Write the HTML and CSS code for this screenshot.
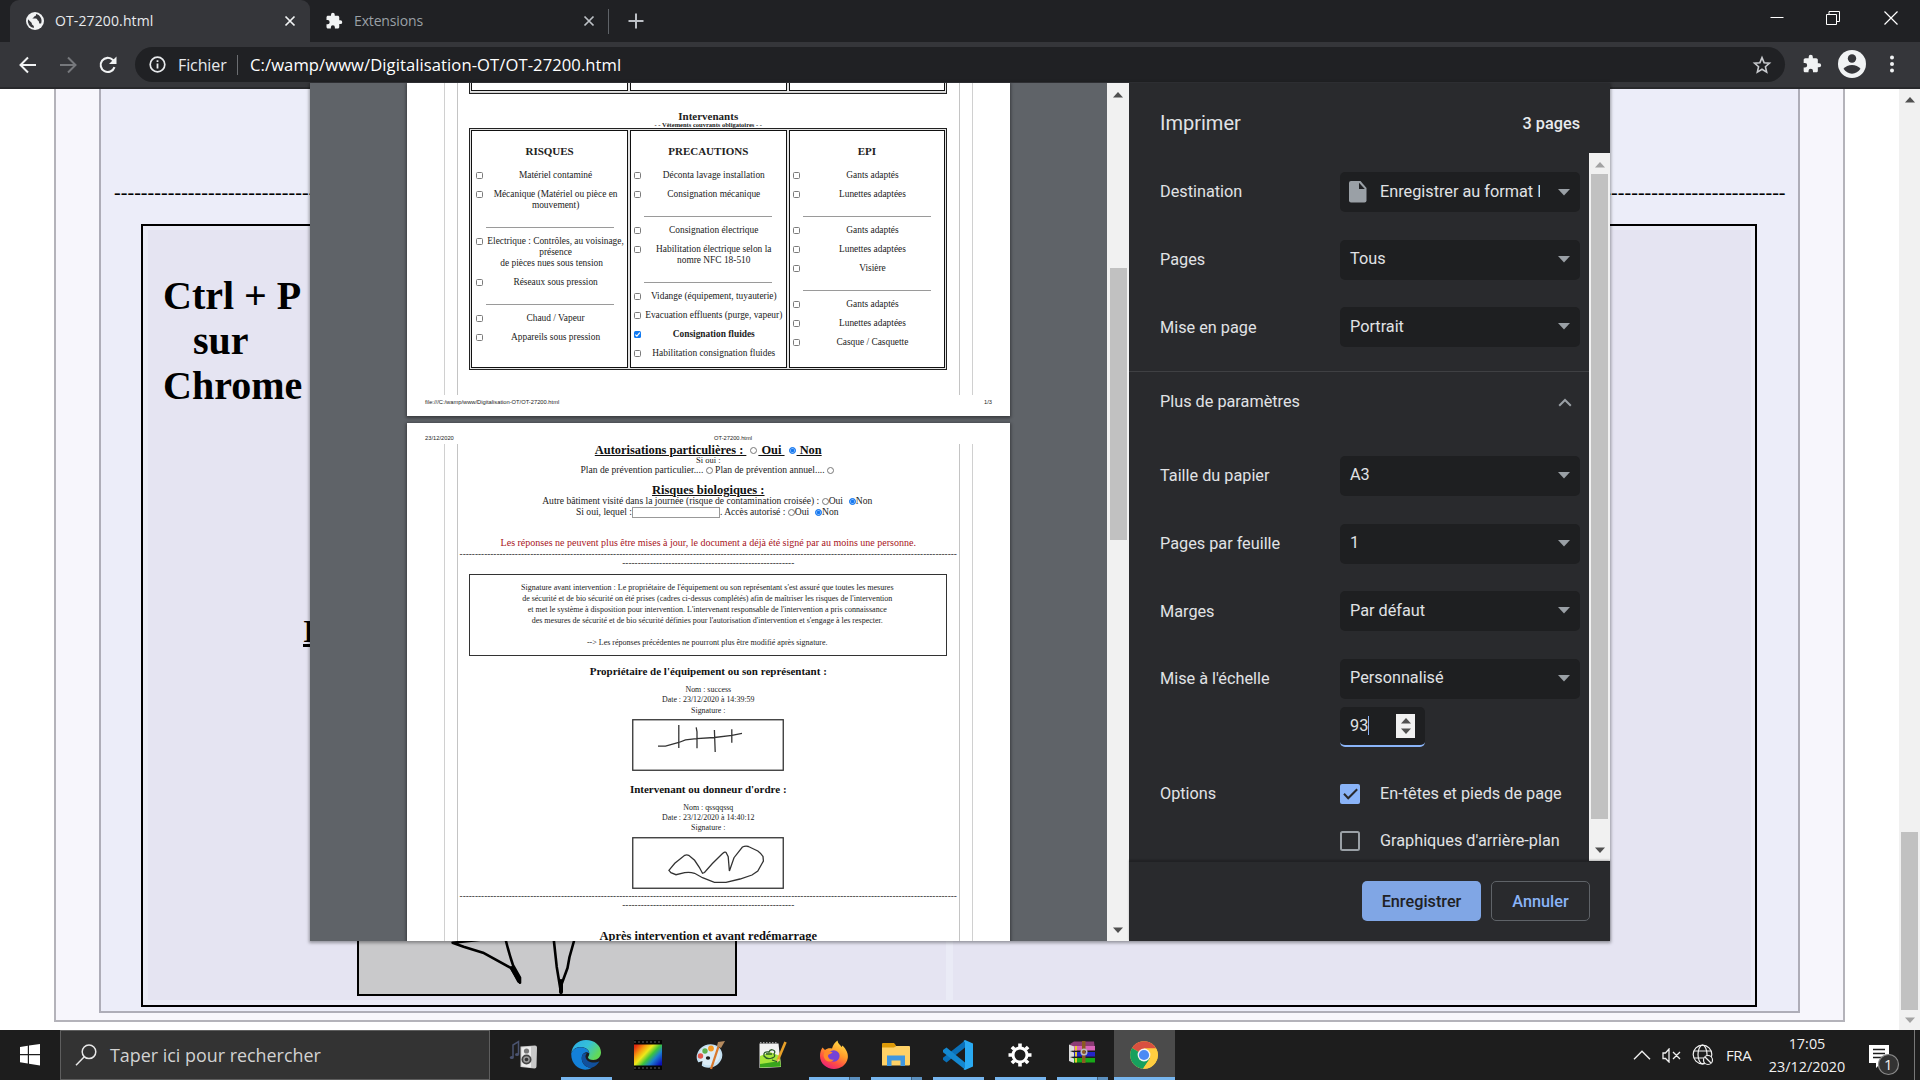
FILE: index.html
```html
<!DOCTYPE html>
<html lang="fr">
<head>
<meta charset="utf-8">
<title>OT-27200.html</title>
<link rel="stylesheet" href="styles.css">
</head>
<body>
<svg class="defs" width="0" height="0" aria-hidden="true">
  <symbol id="puzzle" viewBox="0 0 24 24"><path d="M20.5 11H19V7c0-1.1-.9-2-2-2h-4V3.5a2.5 2.5 0 0 0-5 0V5H4c-1.1 0-2 .9-2 2v3.8h1.5a2.7 2.7 0 0 1 0 5.4H2V20c0 1.1.9 2 2 2h3.8v-1.5a2.7 2.7 0 0 1 5.4 0V22H17c1.1 0 2-.9 2-2v-4h1.5a2.5 2.5 0 0 0 0-5z"/></symbol>
  <symbol id="cross" viewBox="0 0 12 12"><path d="M1.5 1.5l9 9M10.5 1.5l-9 9" fill="none" stroke="currentColor" stroke-width="1.7"/></symbol>
  <symbol id="caret" viewBox="0 0 12 7"><path d="M0 0h12L6 6.5z"/></symbol>
  <symbol id="arrow-up" viewBox="0 0 10 6"><path d="M5 0l5 5.5H0z"/></symbol>
  <symbol id="arrow-down" viewBox="0 0 10 6"><path d="M0 .5h10L5 6z"/></symbol>
</svg>

<div class="tabstrip">
  <div class="tab tab-active">
    <svg width="18" height="18" viewBox="0 0 18 18"><circle cx="9" cy="9" r="9" fill="#f1f3f4"/><path d="M2 7.3l3.8 3.6v1.4l2 1.6v2.2A7.2 7.2 0 0 1 2 7.3zM10 2c.4 1.6-.6 2.2-1.9 2.4-.2 1.4-1.5 1-1.6 2.2h3.6c1.6.5 1 2.1 2.6 2.4l.6 2.4 1.8.2c1.6-4-.6-8.600-5.1-9.600z" fill="#35363a"/></svg>
    <span class="tab-title">OT-27200.html</span>
    <svg class="tab-close" width="12" height="12"><use href="#cross"/></svg>
  </div>
  <div class="tab">
    <svg width="18" height="18" fill="#f1f3f4"><use href="#puzzle"/></svg>
    <span class="tab-title">Extensions</span>
    <svg class="tab-close" width="12" height="12"><use href="#cross"/></svg>
  </div>
  <div class="tab-sep"></div>
  <svg class="new-tab" width="16" height="16" viewBox="0 0 16 16"><path d="M8 .5v15M.5 8h15" stroke="#bdc1c6" stroke-width="2"/></svg>
  <div class="win-controls">
    <svg width="14" height="14" viewBox="0 0 14 14"><path d="M.5 6.500h13" stroke="#fff"/></svg>
    <svg width="14" height="14" viewBox="0 0 14 14"><path d="M.5 3.500h10v10H.5zM3 3.500V.5h10.500v10H11" fill="none" stroke="#fff"/></svg>
    <svg width="14" height="14" viewBox="0 0 14 14"><path d="M.5 .5l13 13M13.500 .5l-13 13" stroke="#fff" stroke-width="1.2"/></svg>
  </div>
</div>

<div class="toolbar">
  <div class="nav">
    <svg width="20" height="20" viewBox="0 0 20 20"><path d="M18 10H3M10 2.500L2.500 10l7.500 7.500" fill="none" stroke="#f1f3f4" stroke-width="2"/></svg>
    <svg width="20" height="20" viewBox="0 0 20 20"><path d="M2 10h15M10 2.500l7.500 7.500-7.500 7.500" fill="none" stroke="#76787c" stroke-width="2"/></svg>
    <svg width="20" height="20" viewBox="0 0 20 20"><path d="M16.500 12.200a7.100 7.100 0 1 1-1.600-7.200l1.500 1.500" fill="none" stroke="#f1f3f4" stroke-width="2.100"/><path d="M18.500 1.500v7.500h-7.500z" fill="#f1f3f4"/></svg>
  </div>
  <div class="omnibox">
    <svg width="17" height="17" viewBox="0 0 17 17"><circle cx="8.500" cy="8.500" r="7.300" fill="none" stroke="#e8eaed" stroke-width="1.700"/><path d="M7.600 7.500h1.800v5H7.600zM7.600 4.200h1.800V6H7.600z" fill="#e8eaed"/></svg>
    <span class="scheme">Fichier</span>
    <span class="omni-sep"></span>
    <span class="url">C:/wamp/www/Digitalisation-OT/OT-27200.html</span>
    <svg class="star" width="20" height="20" viewBox="0 0 24 24"><path d="M12 3.200l2.500 6 6.500.6-4.900 4.300 1.500 6.400L12 17.100l-5.600 3.400 1.500-6.400L3 9.800l6.500-.6z" fill="none" stroke="#c8cace" stroke-width="1.900"/></svg>
  </div>
  <div class="tools">
    <svg width="20" height="20" fill="#f1f3f4"><use href="#puzzle"/></svg>
    <svg width="28" height="28" viewBox="0 0 28 28"><circle cx="14" cy="14" r="14" fill="#f1f3f4"/><circle cx="14" cy="8.500" r="4.200" fill="#35363a"/><path d="M5.500 18.800c2-2.600 5-3.900 8.500-3.900s6.500 1.300 8.500 3.900c-2 3-5 4.900-8.500 4.900s-6.500-1.900-8.500-4.900z" fill="#35363a"/></svg>
    <svg width="6" height="18" viewBox="0 0 6 18" fill="#f1f3f4"><circle cx="3" cy="2.500" r="2"/><circle cx="3" cy="9" r="2"/><circle cx="3" cy="15.500" r="2"/></svg>
  </div>
</div>

<div class="viewport">
  <div class="doc">
    <div class="doc-inner">
      <div class="doc-dashes">---------------------------------------------------------------------------------------------------------------------------------------------------------------------------------------------------------------------------------------------------------</div>
      <div class="doc-box">
        <div class="doc-col">
          <p class="tip">Ctrl + P<br><span class="tip-mid">sur</span><br>Chrome</p>
          <p class="doc-heading">Intervention</p>
          <div class="big-sign">
            <svg width="376" height="122" viewBox="359 872 376 122" fill="none" stroke="#000" stroke-width="2.600" stroke-linejoin="round" stroke-linecap="round"><path d="M483 939.500l-30.400 3.200 11 4 19.400 6 28 15.300 9 14.700v-5l-7-12.500q-4-12-7.500-26M553.700 939l3 27.700 4.300 26v-7l6.500-17.700 2-11 4.500-16"/><path d="M512 968l7 13M561 981v11" stroke-width="4"/></svg>
          </div>
        </div>
        <div class="doc-col"></div>
      </div>
    </div>
  </div>
  <div class="page-scroll">
    <svg width="10" height="6" fill="#505050"><use href="#arrow-up"/></svg>
    <div class="page-thumb"></div>
    <svg width="10" height="6" fill="#a3a3a3"><use href="#arrow-down"/></svg>
  </div>
</div>

<div class="dialog">
  <div class="preview">
    <div class="sheet sheet-1">
      <div class="sheet-body">
        <div class="sheet-inner">
          <div class="grid grid-tail"><div class="cell"></div><div class="cell"></div><div class="cell"></div></div>
          <h2 class="people">Intervenants</h2>
          <p class="clothes">- - Vêtements couvrants obligatoires - -</p>
          <div class="grid grid-main">
            <div class="cell">
              <h3>RISQUES</h3>
              <div class="item"><i class="box"></i><span>Matériel contaminé</span></div>
              <div class="item"><i class="box"></i><span>Mécanique (Matériel ou pièce en<br>mouvement)</span></div>
              <div class="rule"></div>
              <div class="item"><i class="box"></i><span>Electrique : Contrôles, au voisinage,<br>présence<br><span class="shift">de pièces nues sous tension</span></span></div>
              <div class="item"><i class="box"></i><span>Réseaux sous pression</span></div>
              <div class="rule"></div>
              <div class="item"><i class="box"></i><span>Chaud / Vapeur</span></div>
              <div class="item"><i class="box"></i><span>Appareils sous pression</span></div>
            </div>
            <div class="cell">
              <h3>PRECAUTIONS</h3>
              <div class="item"><i class="box"></i><span>Déconta lavage installation</span></div>
              <div class="item"><i class="box"></i><span>Consignation mécanique</span></div>
              <div class="rule"></div>
              <div class="item"><i class="box"></i><span>Consignation électrique</span></div>
              <div class="item"><i class="box"></i><span>Habilitation électrique selon la<br>nomre NFC 18-510</span></div>
              <div class="rule"></div>
              <div class="item"><i class="box"></i><span>Vidange (équipement, tuyauterie)</span></div>
              <div class="item"><i class="box"></i><span>Evacuation effluents (purge, vapeur)</span></div>
              <div class="item strong"><i class="box box-on"><svg width="7" height="7" viewBox="0 0 7 7"><path d="M1.300 3.600L2.900 5.200 5.800 1.600" fill="none" stroke="#fff" stroke-width="1.200"/></svg></i><span>Consignation fluides</span></div>
              <div class="item"><i class="box"></i><span>Habilitation consignation fluides</span></div>
            </div>
            <div class="cell">
              <h3>EPI</h3>
              <div class="item"><i class="box"></i><span>Gants adaptés</span></div>
              <div class="item"><i class="box"></i><span>Lunettes adaptées</span></div>
              <div class="rule"></div>
              <div class="item"><i class="box"></i><span>Gants adaptés</span></div>
              <div class="item"><i class="box"></i><span>Lunettes adaptées</span></div>
              <div class="item"><i class="box"></i><span>Visière</span></div>
              <div class="rule"></div>
              <div class="item"><i class="box"></i><span>Gants adaptés</span></div>
              <div class="item"><i class="box"></i><span>Lunettes adaptées</span></div>
              <div class="item"><i class="box"></i><span>Casque / Casquette</span></div>
            </div>
          </div>
        </div>
      </div>
      <div class="sheet-foot"><span>file:///C:/wamp/www/Digitalisation-OT/OT-27200.html</span><span>1/3</span></div>
    </div>

    <div class="sheet sheet-2">
      <div class="sheet-head"><span class="head-date">23/12/2020</span><span>OT-27200.html</span></div>
      <div class="sheet-body">
        <div class="sheet-inner">
          <h2 class="auth"><u>Autorisations particulières : </u><i class="radio"></i><u>&nbsp;Oui </u><i class="radio radio-on"></i><u>&nbsp;Non</u></h2>
          <p class="if-yes">Si oui :</p>
          <p class="plan">Plan de prévention particulier.... <i class="radio"></i> Plan de prévention annuel.... <i class="radio"></i></p>
          <h2 class="bio"><u>Risques biologiques :</u></h2>
          <p class="line">Autre bâtiment visité dans la journée (risque de contamination croisée) : <i class="radio"></i>Oui &nbsp;<i class="radio radio-on"></i>Non</p>
          <p class="line access">Si oui, lequel :<i class="field"></i>. Accès autorisé : <i class="radio"></i>Oui &nbsp;<i class="radio radio-on"></i>Non</p>
          <p class="locked">Les réponses ne peuvent plus être mises à jour, le document a déjà été signé par au moins une personne.</p>
          <p class="dash-long">------------------------------------------------------------------------------------------------------------------------------------------------------------------</p>
          <p class="dash-short">--------------------------------------------------------</p>
          <div class="notice">
            <p>Signature avant intervention : Le propriétaire de l'équipement ou son représentant s'est assuré que toutes les mesures</p>
            <p>de sécurité et de bio sécurité on été prises (cadres ci-dessus complétés) afin de maîtriser les risques de l'intervention</p>
            <p>et met le système à disposition pour intervention. L'intervenant responsable de l'intervention a pris connaissance</p>
            <p>des mesures de sécurité et de bio sécurité définies pour l'autorisation d'intervention et s'engage à les respecter.</p>
            <p class="notice-last">--&gt; Les réponses précédentes ne pourront plus être modifié après signature.</p>
          </div>
          <h3 class="signer">Propriétaire de l'équipement ou son représentant :</h3>
          <div class="who"><p>Nom : success</p><p>Date : 23/12/2020 à 14:39:59</p><p class="who-sign">Signature :</p></div>
          <svg class="sign" width="152" height="52" viewBox="0 0 152 52"><rect x=".75" y=".75" width="150.500" height="50.500"/><path d="M26 27.200h7.500l13.300-3.700 6.700-2.600 11-1.200 17.900-1.200 17.600-2.200 10-2M46.800 6v23M64.200 8.300l.8 4.500v16.500M82.400 11l.8 22M99.800 10.300v13.400"/></svg>
          <h3 class="signer signer-2">Intervenant ou donneur d'ordre :</h3>
          <div class="who who-2"><p>Nom : qssqqssq</p><p>Date : 23/12/2020 à 14:40:12</p><p>Signature :</p></div>
          <svg class="sign sign-2" width="152" height="52" viewBox="0 0 152 52"><rect x=".75" y=".75" width="150.500" height="50.500"/><path d="M36.900 33.300l5.900-7 9.900-8q2-.8 4 0l5.900 5 4.700 7 3.200 6 2-.8 7.900-9 9.900-9.800q3-2.500 3.900-1l2 4 1.200 14.300 4.600-13.300 8.400-10.700q3-1.300 6-.5l9.400 4.500q4 3 5.200 5.500l.4 4.500-5.600 10-5.800 4-12 4-14 3.300H82.400l-11.900-4.600-7.900-4.400q-5-1.500-9.900-.6l-8.700 2-5.100-2z"/></svg>
          <p class="dash-long dash-2">------------------------------------------------------------------------------------------------------------------------------------------------------------------</p>
          <p class="dash-short dash-3">--------------------------------------------------------</p>
          <h2 class="after">Après intervention et avant redémarrage</h2>
        </div>
      </div>
    </div>
  </div>

  <div class="preview-scroll">
    <svg width="10" height="6" fill="#505050"><use href="#arrow-up"/></svg>
    <div class="preview-thumb"></div>
    <svg width="10" height="6" fill="#505050"><use href="#arrow-down"/></svg>
  </div>

  <div class="panel">
    <div class="panel-head"><span class="panel-title">Imprimer</span><span class="panel-count">3 pages</span></div>
    <div class="panel-mid">
      <div class="settings">
        <div class="row first"><span class="label">Destination</span><div class="select dest"><svg width="18" height="22" viewBox="0 0 18 22"><path d="M2 0h9.500L17.500 7v12.500a2 2 0 0 1-2 2H2a2 2 0 0 1-2-2V2a2 2 0 0 1 2-2z" fill="#9aa0a6"/><path d="M10 1.800V8h5.800z" fill="#1f2023"/></svg><span class="dest-text">Enregistrer au format PDF</span><svg class="caret" width="12" height="7"><use href="#caret"/></svg></div></div>
        <div class="row"><span class="label">Pages</span><div class="select"><span>Tous</span><svg class="caret" width="12" height="7"><use href="#caret"/></svg></div></div>
        <div class="row"><span class="label">Mise en page</span><div class="select"><span>Portrait</span><svg class="caret" width="12" height="7"><use href="#caret"/></svg></div></div>
        <div class="more"><span>Plus de paramètres</span><svg width="14" height="9" viewBox="0 0 14 9"><path d="M1.200 7.800L7 2l5.800 5.800" fill="none" stroke="#9aa0a6" stroke-width="2"/></svg></div>
        <div class="row paper"><span class="label">Taille du papier</span><div class="select"><span>A3</span><svg class="caret" width="12" height="7"><use href="#caret"/></svg></div></div>
        <div class="row"><span class="label">Pages par feuille</span><div class="select"><span>1</span><svg class="caret" width="12" height="7"><use href="#caret"/></svg></div></div>
        <div class="row"><span class="label">Marges</span><div class="select"><span>Par défaut</span><svg class="caret" width="12" height="7"><use href="#caret"/></svg></div></div>
        <div class="row"><span class="label">Mise à l'échelle</span><div class="select"><span>Personnalisé</span><svg class="caret" width="12" height="7"><use href="#caret"/></svg></div></div>
        <div class="scale"><span>93</span><i class="cursor"></i><span class="spin"><svg width="10" height="6" fill="#505050"><use href="#arrow-up"/></svg><svg width="10" height="6" fill="#505050"><use href="#arrow-down"/></svg></span></div>
        <div class="option"><span class="label">Options</span><svg width="20" height="20" viewBox="0 0 20 20"><rect width="20" height="20" rx="2" fill="#8ab4f8"/><path d="M4 9.800l4.200 4.400L17.200 5.300" fill="none" stroke="#292a2d" stroke-width="2"/></svg><span>En-têtes et pieds de page</span></div>
        <div class="option option-2"><span class="label"></span><svg width="20" height="20" viewBox="0 0 20 20"><rect x="1" y="1" width="18" height="18" rx="1.500" fill="none" stroke="#9aa0a6" stroke-width="2"/></svg><span>Graphiques d'arrière-plan</span></div>
      </div>
      <div class="panel-scroll">
        <svg width="10" height="6" fill="#a3a3a3"><use href="#arrow-up"/></svg>
        <div class="panel-thumb"></div>
        <svg width="10" height="6" fill="#505050"><use href="#arrow-down"/></svg>
      </div>
    </div>
    <div class="panel-foot"><span class="btn save">Enregistrer</span><span class="btn cancel">Annuler</span></div>
  </div>
</div>

<div class="taskbar">
  <div class="start"><svg width="20" height="22" viewBox="0 0 20 22" fill="#fff"><path d="M0 3l7.800-1.200V10H0zM9 1.600L20 0v10H9zM0 11.200h7.800v8.200L0 18.300zM9 11.200h11V21.500L9 19.700z"/></svg></div>
  <div class="search"><svg width="22" height="22" viewBox="0 0 22 22" fill="none" stroke="#e8e8e8" stroke-width="1.500"><circle cx="14" cy="7.800" r="6.800"/><path d="M9.300 12.700L1 21.200"/></svg><span>Taper ici pour rechercher</span></div>
  <div class="apps">
    <div class="app"><svg width="30" height="30" viewBox="0 0 30 30"><path d="M4 17V5l5.500-3.500v13" fill="none" stroke="#4a5370" stroke-width="1.500"/><ellipse cx="2.800" cy="17.500" rx="2" ry="1.600" fill="#4a5370"/><ellipse cx="8" cy="14.500" rx="2" ry="1.600" fill="#4a5370"/><path d="M11.500 6.500L26 5.500q2 0 2 2l-.5 19q0 2-2 2l-14-1.500z" fill="#c9c9c9"/><path d="M12.500 7.500l9.500-.7v20.700l-9.500-1.200z" fill="#ececec"/><circle cx="17.500" cy="11" r="2.600" fill="#777"/><circle cx="17.500" cy="19.500" r="5" fill="#444"/><circle cx="17.500" cy="19.500" r="3.300" fill="#999"/><circle cx="17.500" cy="19.500" r="1.800" fill="#333"/></svg></div>
    <div class="app run"><svg width="30" height="30" viewBox="0 0 30 30"><defs><linearGradient id="eg" x1="0" y1="0" x2="1" y2=".5"><stop offset="0" stop-color="#2aa9e8"/><stop offset=".55" stop-color="#35c1d8"/><stop offset="1" stop-color="#62d957"/></linearGradient></defs><path d="M.3 13.500C1 5.700 7 0 15 0c8.500 0 15 5.500 15 12.500 0 4.500-3.500 7.500-7.500 7.500-3.500 0-5.500-1.500-5.500-2.500s1.300-1.500 1.300-4C18.300 9.500 14 7 9.500 7 5 7 1.500 9.500.3 13.500z" fill="url(#eg)"/><path d="M.2 13.500C1.500 9.500 5 7.200 9.500 7.200c4.800 0 8.600 2.600 8.800 6.300-2-2-6-1.500-7.300 2.500-1.500 5.500 3 12.500 10 11.500C13.500 33 0 28 .2 13.500z" fill="#1380d8"/><path d="M11.500 14.500C9 21 13.500 28 20.500 27.700c3.500-1 6.500-3.700 8-6.500-5 2.500-13 1.500-14-4.200-.2-1.500.5-2.700 1.500-3.700-1.500-.3-3.500 0-4.500 1.200z" fill="#11509c"/></svg></div>
    <div class="app"><svg width="28" height="30" viewBox="0 0 28 30"><defs><linearGradient id="mv" x1="0" y1=".15" x2="1" y2=".85"><stop offset="0" stop-color="#e22a10"/><stop offset=".22" stop-color="#f59a10"/><stop offset=".4" stop-color="#ede81a"/><stop offset=".58" stop-color="#3cc43c"/><stop offset=".75" stop-color="#1b7ecf"/><stop offset="1" stop-color="#0c10b8"/></linearGradient></defs><path d="M0 0h28v30H0z" fill="#050505"/><path d="M0 2h28M0 28h28" stroke="#333" stroke-width="2" stroke-dasharray="2 2"/><path d="M0 4.500h28v21H0z" fill="url(#mv)"/></svg></div>
    <div class="app"><svg width="30" height="30" viewBox="0 0 30 30"><ellipse cx="14.500" cy="16" rx="13" ry="11.500" transform="rotate(-22 14.500 16)" fill="#c3dff0"/><ellipse cx="14.500" cy="15.500" rx="11" ry="9.500" transform="rotate(-22 14.500 15.500)" fill="#dcecf6"/><circle cx="5.500" cy="16" r="2.700" fill="#e2574c"/><circle cx="10" cy="11" r="2.700" fill="#5eb04f"/><circle cx="16" cy="8.500" r="2.900" fill="#f59a23"/><ellipse cx="13" cy="18" rx="2.200" ry="1.800" fill="#1d1d1d"/><path d="M1.500 23l6-2-1 6z" fill="#1d1d1d"/><path d="M23.500 6.500L16 29" stroke="#d9772b" stroke-width="2.300"/><path d="M22 6l1-4 7-1-4 7z" fill="#b58a5e"/></svg></div>
    <div class="app"><svg width="30" height="30" viewBox="0 0 30 30"><path d="M2.500 3.500h19l2.500 23.500-21.500 1z" fill="#f2f2f2"/><path d="M3 16l10-4 10 4 .8 10.500L3 27.500z" fill="#a5e63a"/><path d="M3 24l20-3 .8 5.500L3 27.500z" fill="#38a51c"/><path d="M7 16q-1-5 5-4 1-3 4-2t1 4q2 3-2 4-5 2-8-2zM15 20l6 2M9 14h6" fill="none" stroke="#2d5b2d" stroke-width="1.300"/><path d="M3 3h18" stroke="#999" stroke-width="2" stroke-dasharray="1.500 1.500"/><path d="M28.500 2L20.500 21" stroke="#e8a028" stroke-width="2.600"/><path d="M20.800 19l-.8 4 2.500-3z" fill="#eecb95"/></svg></div>
    <div class="app run multi"><svg width="30" height="30" viewBox="0 0 30 30"><defs><linearGradient id="ff" x1=".8" y1="0" x2=".3" y2="1"><stop offset="0" stop-color="#ffe14a"/><stop offset=".45" stop-color="#ff9a2a"/><stop offset=".75" stop-color="#ff4b45"/><stop offset="1" stop-color="#e8207c"/></linearGradient></defs><path d="M3.500 7.500L6 10c2-1.500 4-2.200 7-1.500C14 5 16 2 18.500.5c.3 3 2.500 4 4 6.500l1-1.500C27.500 9.500 29.500 14 28.800 18 27.500 25 21.500 29 15 29 7.500 29 1 23.500 1 16c0-3.500 1-6.500 2.500-8.500z" fill="url(#ff)"/><circle cx="14.800" cy="16" r="5.800" fill="#7542d6"/><path d="M6 10c3 .5 5 1.500 7.500 2.200-1 2-4 1.500-4.500 3.300-.5 2 2 5 6 4-3 4-10 2-10.500-4z" fill="#ff8a2a"/></svg></div>
    <div class="app run multi"><svg width="28" height="24" viewBox="0 0 28 24"><path d="M0 1q0-1 1-1h11l2 2.500-1 3H0z" fill="#dd9a08"/><path d="M0 4.500h12l2-1.500h13q1 0 1 1v17.500q0 1-1 1H0z" fill="#ffd166"/><path d="M5 12.500h18V23h-4.500v-5.500h-9V23H5z" fill="#3f97e0"/></svg></div>
    <div class="app run"><svg width="30" height="30" viewBox="0 0 30 30"><path d="M22 7.500L3.500 22.500 0 19.800v-2L22 .500z" fill="#0a70b8"/><path d="M22 22.500L3.500 7.500 0 10v2.200L22 29.500z" fill="#1488d0"/><path d="M22 0l8 3.500v23L22 30l-1.500-.8 1.500-1.500V2.500L20.500 1z" fill="#2aaaf2"/></svg></div>
    <div class="app run"><svg width="24" height="24" viewBox="-12 -12 24 24" fill="none" stroke="#fff"><circle r="7" stroke-width="3"/><path d="M0-8V-11.500M0 8V11.500M8 0H11.500M-8 0H-11.500M5.700-5.700L8.100-8.100M-5.700 5.700L-8.100 8.100M5.700 5.700L8.100 8.100M-5.700-5.700L-8.100-8.100" stroke-width="3.600"/></svg></div>
    <div class="app run multi"><svg class="lift" width="28" height="24" viewBox="0 0 28 24"><path d="M2 3l4-2.500h20L27 9H5z" fill="#8d3b76"/><path d="M5 5h22v4.500H5z" fill="#d864b8"/><path d="M5 11h22v4.500H5z" fill="#2424c8"/><path d="M5 17h22v4.500H5z" fill="#18a818"/><path d="M1 3.500l5 2v4l-4 .5 4 1.500v4l-4 .5 4 1.500v4.500l-5-2z" fill="#ddd"/><path d="M8 5v4.500M8 11v4.500M8 17v4.500" stroke="#e8c830" stroke-width="2"/><path d="M14 0h3.500v22H14z" fill="#8a5a22"/><circle cx="16" cy="11" r="2.800" fill="none" stroke="#bbb" stroke-width="1.500"/></svg></div>
    <div class="app run active"><svg width="28" height="28" viewBox="0 0 28 28"><circle cx="14" cy="14" r="13.800" fill="#ffcd40"/><path d="M14 14L2 7.100A13.800 13.800 0 0 1 26.200 7.500H14z" fill="#d95040"/><path d="M14 14L2 7.100A13.800 13.800 0 0 0 13 27.800L20 17.400z" fill="#17a05e"/><path d="M26.200 7.500H14L20 17.400 13 27.800A13.800 13.800 0 0 0 26.200 7.500z" fill="#ffcd40"/><circle cx="14" cy="14" r="6.400" fill="#f4f4f4"/><circle cx="14" cy="14" r="5.100" fill="#4a8af4"/></svg></div>
  </div>
  <div class="tray">
    <svg width="18" height="10" viewBox="0 0 18 10"><path d="M1 9.300l8-8 8 8" fill="none" stroke="#f0f0f0" stroke-width="1.400"/></svg>
    <svg class="vol" width="19" height="15" viewBox="0 0 19 15" fill="none" stroke="#f0f0f0" stroke-width="1.300"><path d="M1 5h2.500L7 1v13L3.500 10.500H1zM11 4l7 7M18 4l-7 7"/></svg>
    <svg class="net" width="22" height="22" viewBox="0 0 22 22" fill="none" stroke="#f0f0f0" stroke-width="1.200"><circle cx="10.500" cy="10.500" r="9.300"/><ellipse cx="10.500" cy="10.500" rx="4.500" ry="9.300"/><path d="M2 7h17M2 14h11"/><circle cx="16" cy="16" r="4.500" fill="#1d1d1d"/><path d="M13 13l6 6"/></svg>
    <span class="lang">FRA</span>
    <div class="clock"><span>17:05</span><span>23/12/2020</span></div>
    <div class="notif"><svg width="32" height="32" viewBox="0 0 32 32"><path d="M0 0h20v18h-8l-5 5v-5H0z" fill="#fff"/><path d="M4 4.500h12M4 8.500h12M4 12.500h9" stroke="#1d1d1d" stroke-width="1.300"/><circle cx="19.500" cy="19.500" r="10" fill="#333" stroke="#8a8a8a" stroke-width="1.200"/></svg><span class="badge">1</span></div>
    <div class="show-desktop"></div>
  </div>
</div>
</body>
</html>
```
FILE: styles.css
```css
* { box-sizing: border-box; }
html, body { margin: 0; height: 1080px; overflow: hidden; }
body { width: 1920px; display: flex; flex-direction: column; background: #fff; position: relative; }
p, h2, h3 { margin: 0; }
svg { display: block; flex: none; }
.defs { position: absolute; }

/* Browser window */
.tabstrip { height: 42px; flex: none; display: flex; align-items: center; background: #202124; font: 15px/20px "Open Sans", sans-serif; color: #9aa0a6; padding-left: 10px; }
.tab { width: 298px; height: 42px; display: flex; align-items: center; padding: 0 13px 0 15px; }
.tab-active { width: 300px; background: #35363a; color: #e8eaed; border-radius: 9px 9px 0 0; padding: 0 14px 0 16px; }
.tab-title { margin-left: 11px; flex: 1; font-size: 14px; letter-spacing: -.15px; }
.tab-active .tab-title { letter-spacing: .12px; }
.tab-close { color: #bdc1c6; }
.tab-active .tab-close { color: #f1f3f4; }
.tab-sep { width: 1px; height: 25px; background: #5f6368; margin-right: 19px; }
.win-controls { margin-left: auto; display: flex; gap: 43px; padding: 0 22px 6px 0; }
.win-controls svg:nth-child(2) { margin-left: -1px; margin-right: 1px; }

.toolbar { height: 47px; flex: none; background: #35363a; border-bottom: 2px solid #28292c; display: flex; align-items: flex-start; padding-top: 5px; }
.nav { display: flex; gap: 20px; padding: 8px 17px 0 18px; }
.omnibox { width: 1650px; height: 35px; border-radius: 18px; background: #202124; display: flex; align-items: center; padding: 0 13px 0 14px; color: #e8eaed; font: 17px/24px "Open Sans", sans-serif; }
.scheme { width: 59px; margin-left: 12px; font-size: 16px; letter-spacing: -.1px; }
.omni-sep { width: 1px; height: 20px; background: #6b6d71; margin-right: 12px; }
.url { font-size: 16.600px; letter-spacing: .08px; color: #fff; }
.star { margin-left: auto; }
.tools { display: flex; align-items: center; padding: 3px 0 0 17px; gap: 16px; }
.tools svg:last-child { margin-left: 7px; }

/* Work order page behind the dialog */
.viewport { height: 941px; flex: none; display: flex; padding-left: 54px; overflow: hidden; }
.doc { width: 1791px; height: 933px; border: 2px solid #b4b3ba; border-top: 0; background: #f7f6fc; padding: 0 43px 7px; }
.doc-inner { height: 924px; border: 2px solid #aeadb8; border-top: 0; background: #ecedf9; padding: 93px 41px 4px 40px; font-family: "Liberation Serif", serif; display: flex; flex-direction: column; }
.doc-dashes { height: 42px; margin: 0 -31px 0 -27px; font-size: 20px; line-height: 20px; letter-spacing: .053px; white-space: nowrap; }
.doc-box { flex: 1; border: 2px solid #000; background: #eaebf6; padding: 4px 4px 5px 5px; display: flex; gap: 7px; }
.doc-col { flex: 1; background: #e5e4f2; display: flex; flex-direction: column; align-items: flex-start; }
.tip { margin: 43px 0 0 15px; font-size: 40px; line-height: 45px; font-weight: bold; white-space: nowrap; }
.tip-mid { margin-left: 30px; }
.doc-heading { margin: 205px 0 0 155px; font-size: 32px; line-height: 36px; font-weight: bold; text-decoration: underline; text-decoration-thickness: 3px; }
.big-sign { margin: 221px 0 0 209px; width: 380px; height: 126px; border: 2px solid #000; background: #c9c9cb; }
.page-scroll { width: 21px; margin-left: auto; background: #f1f1f1; display: flex; flex-direction: column; align-items: center; padding: 8px 0 7px; }
.page-thumb { width: 17px; height: 178px; background: #c1c1c1; margin: auto 0 7px; }

/* Print dialog */
.dialog { position: absolute; left: 310px; top: 83px; width: 1300px; height: 858px; display: flex; background: #292a2d; box-shadow: 0 1px 3px 1px rgba(0,0,0,.35); }
.preview { width: 797px; height: 858px; background: #5f6368; padding-left: 97px; overflow: hidden; font-family: "Liberation Serif", serif; color: #222; }
.sheet { width: 603px; background: #fff; box-shadow: 0 1px 3px 1px rgba(0,0,0,.4); }
.sheet-1 { height: 333px; }
.sheet-2 { height: 540px; margin-top: 7px; }
.sheet-body { width: 529px; margin-left: 37px; border: solid #d0d0d0; border-width: 0 1.500px 0 1px; padding: 0 12.500px 0 12px; overflow: hidden; }
.sheet-inner { border: solid #c4c4c4; border-width: 0 1.500px 0 1px; text-align: center; white-space: nowrap; }
.sheet-1 .sheet-inner { height: 313px; }
.sheet-2 .sheet-inner { height: 520px; }
.grid { width: 478px; margin: 0 auto; display: flex; gap: 2px; border: 1px solid #222; background: #cfcfcf; padding: 1px; }
.cell { flex: 1; border: 1.500px solid #111; background: #fff; outline: 1px solid #e4e4e4; }
.grid-tail { height: 12px; border-top: 0; margin-top: -1px; padding: 0 1px 2px; }
.grid-tail .cell { border-top: 0; }
.people { margin-top: 16px; font-size: 11px; line-height: 12px; }
.clothes { font-size: 6.500px; line-height: 6px; font-weight: bold; height: 6px; }
.grid-main { height: 242px; }
.cell h3 { margin-top: 12px; margin-bottom: 11px; font-size: 11px; line-height: 16px; }
.item { display: flex; font-size: 9.400px; line-height: 11px; margin-bottom: 8px; padding-left: 4px; }
.cell + .cell .item { padding-left: 3px; }
.item > span { flex: 1; }
.item .shift { margin-right: 8px; }
.strong { font-weight: bold; }
.box { width: 7px; height: 7px; margin: 2px 1px 0 0; border: 1px solid #7b7b7b; border-radius: 1.500px; flex: none; }
.box-on { border: 0; background: #0f79f2; }
.rule { width: 128px; height: 1px; margin: 16px auto 8px; background: #9a9a9a; }
.sheet-foot, .sheet-head { font: 5.750px/8px "Liberation Sans", sans-serif; color: #222; display: flex; }
.sheet-foot { justify-content: space-between; padding: 3px 18px 0 18px; }
.sheet-head { height: 21px; padding: 11px 0 0 18px; }
.head-date { width: 289px; }
.radio { display: inline-block; width: 7px; height: 7px; border: 1px solid #777; border-radius: 50%; background: #fff; vertical-align: -.5px; }
.radio-on { border: 1px solid #1477ef; background: #1477ef; box-shadow: inset 0 0 0 .7px #9cc8ff; }
.auth { font-size: 12.400px; line-height: 12px; height: 12px; color: #111; }
.auth .radio { margin: 0 1px 0 4px; vertical-align: .5px; }
.if-yes { font-size: 8.500px; line-height: 8px; }
.plan { font-size: 9.600px; line-height: 12px; padding-right: 2px; }
.bio { margin-top: 8px; font-size: 12.500px; line-height: 12px; height: 11px; color: #111; }
.line { font-size: 9.600px; line-height: 11px; height: 11px; padding-right: 2px; }
.line .radio-on { margin-left: 1px; }
.field { display: inline-block; width: 88px; height: 11px; border: 1px solid #999; vertical-align: -3px; }
.locked { margin-top: 20px; font-size: 10px; line-height: 11px; height: 12px; color: #a8141c; }
.dash-long, .dash-short { font-size: 9.230px; line-height: 10px; height: 10px; margin: 0; color: #000; }
.dash-short { line-height: 9px; height: 9px; }
.notice { width: 478px; height: 82px; margin: 6px auto 0; border: 1.500px solid #333; padding-top: 7px; padding-right: 2px; font-size: 8px; line-height: 11px; }
.notice-last { margin-top: 11px; }
.signer { margin-top: 9px; font-size: 11px; line-height: 12px; color: #111; }
.who { margin-top: 8px; font-size: 7.900px; line-height: 10px; }
.who-sign { line-height: 11px; }
.sign { margin: 3px auto 0; fill: none; stroke: #333; stroke-width: 1.300; }
.signer-2 { margin-top: 12px; }
.sign-2 { margin-top: 4px; }
.dash-2 { margin-top: 2px; }
.dash-3 { line-height: 9px; height: 9px; }
.after { margin-top: 20px; font-size: 12.450px; line-height: 12px; color: #111; }

.preview-scroll { width: 22px; background: #f1f1f1; display: flex; flex-direction: column; align-items: center; padding: 9px 0 8px; }
.preview-thumb { width: 17px; height: 272px; margin: 170px 0 auto; background: #c1c1c1; }

.panel { width: 481px; display: flex; flex-direction: column; background: #292a2d; color: #e0e2e5; font: 16.250px/20px Roboto, sans-serif; }
.panel-head { height: 70px; display: flex; justify-content: space-between; align-items: center; padding: 10px 30px 0 31px; }
.panel-title { font-size: 20px; }
.panel-count { font-weight: 500; font-size: 16.250px; color: #e8eaed; padding-top: 2px; }
.panel-mid { height: 708px; display: flex; }
.settings { width: 460px; height: 708px; overflow: hidden; }
.row { display: flex; align-items: center; padding-left: 31px; margin-bottom: 27.500px; height: 40px; }
.first { margin-top: 19px; }
.label { width: 180px; flex: none; padding-top: 1px; }
.first .label, .paper .label { padding-top: 0; }
.select { width: 240px; height: 40px; border-radius: 5px; background: #1e1f21; display: flex; align-items: center; padding: 0 10px 1px; }
.paper .select { padding-bottom: 2px; }
.caret { margin-left: auto; fill: #9aa0a6; }
.dest { padding: 0 10px 0 9px; }
.dest-text { width: 160px; margin-left: 13px; overflow: hidden; white-space: nowrap; }
.more { height: 59px; border-top: 1px solid #3f4043; display: flex; align-items: center; justify-content: space-between; padding: 2px 17px 0 31px; margin-top: -3.500px; margin-bottom: 26px; }
.scale { width: 85px; height: 40px; margin: -19.500px 0 0 211px; border-radius: 5px; border-bottom: 2px solid #8ab4f8; background: #1e1f21; display: flex; align-items: center; padding: 0 10px; }
.cursor { width: 1px; height: 19px; background: #8ab4f8; }
.spin { width: 19px; height: 24px; margin-left: auto; background: #f1f1f1; display: flex; flex-direction: column; align-items: center; justify-content: center; gap: 4px; }
.option { height: 20px; margin-top: 37px; padding-left: 31px; display: flex; align-items: center; }
.option .label { padding-top: 0; }
.option svg { margin-right: 20px; }
.option-2 { margin-top: 27px; }
.panel-scroll { width: 21px; background: #f1f1f1; display: flex; flex-direction: column; align-items: center; padding: 9px 0 8px; }
.panel-thumb { width: 17px; height: 645px; margin: 6px 0 auto; background: #c1c1c1; }
.panel-foot { height: 80px; border-top: 1px solid #202124; box-shadow: 0 -1px 2px rgba(0,0,0,.25); display: flex; justify-content: flex-end; gap: 10px; padding: 19px 20px 0 0; background: #292a2d; }
.btn { height: 40px; border-radius: 5px; text-align: center; line-height: 41px; font-weight: 500; font-size: 16.250px; }
.save { width: 119px; background: #80a6e5; color: #202124; }
.cancel { width: 99px; border: 1px solid #5f6368; line-height: 40px; color: #8ab4f8; }

/* Windows taskbar */
.taskbar { height: 50px; flex: none; background: #1d1d1d; display: flex; color: #f0f0f0; font: 15px/20px "Open Sans", sans-serif; }
.start { width: 60px; display: flex; align-items: center; justify-content: center; }
.search { width: 430px; background: #333; border: 1px solid #5e5e5e; display: flex; align-items: center; padding-left: 14px; color: #d2d2d2; font-size: 17.900px; gap: 13px; }
.apps { display: flex; padding-left: 4px; gap: 1px; }
.app { width: 61px; height: 50px; display: flex; align-items: center; justify-content: center; position: relative; padding-right: 2px; }
.lift { margin-bottom: 4px; }
.run::after { content: ""; position: absolute; left: 5px; right: 5px; bottom: 0; height: 3px; background: #76b5ee; }
.multi::after { background: linear-gradient(90deg, #76b5ee 40px, #3f5f7c 40px, #3f5f7c 41px, #5b8fbe 41px); }
.active { background: #4b4b4b; }
.active::after { left: 0; right: 0; }
.tray { margin-left: auto; display: flex; align-items: center; }
.vol { margin-left: 11px; }
.net { margin-left: 11px; }
.lang { margin-left: 12px; width: 30px; font-size: 15px; letter-spacing: -.4px; }
.clock { width: 84px; margin-left: 9px; display: flex; flex-direction: column; align-items: center; line-height: 23px; font-size: 14.400px; }
.notif { position: relative; margin-left: 20px; padding-top: 12px; }
.badge { position: absolute; left: 15px; top: 21px; font-size: 15px; }
.show-desktop { width: 6px; height: 50px; border-left: 1px solid #777; margin-left: 13px; }
```
